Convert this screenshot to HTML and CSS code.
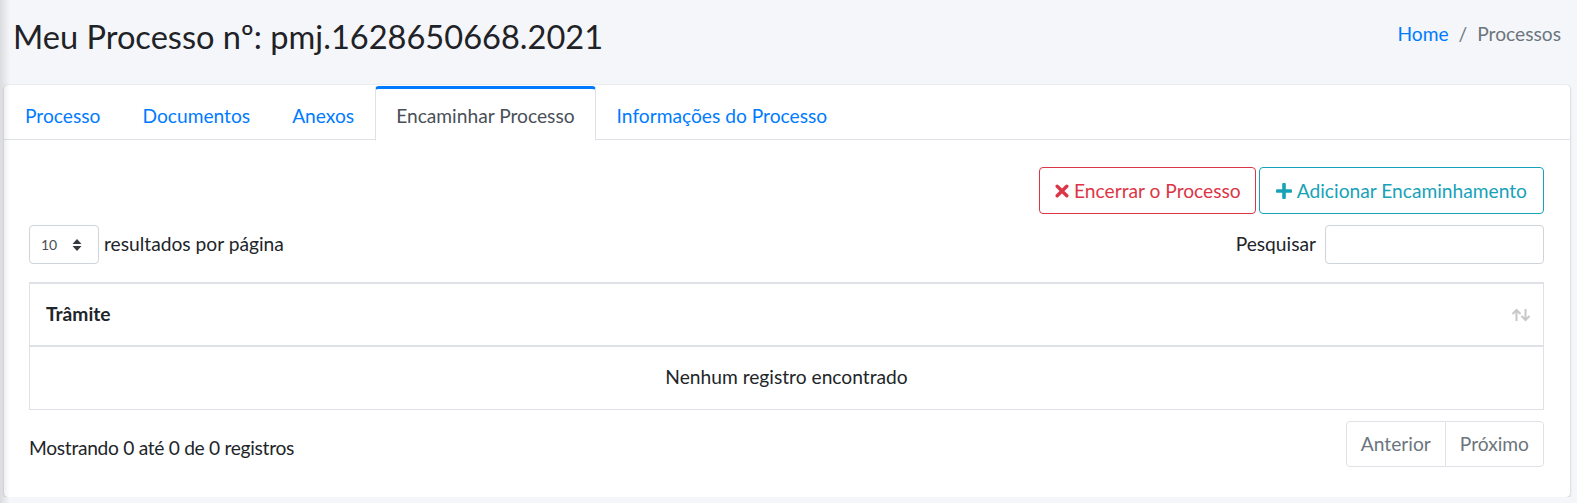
FILE: index.html
```html
<!DOCTYPE html>
<html lang="pt-BR">
<head>
<meta charset="utf-8">
<title>Meu Processo</title>
<link rel="stylesheet" href="styles.css">
</head>
<body>
<div class="shade"></div>
<main class="content">
  <header class="content-header">
    <h1 class="page-title">Meu Processo nº: pmj.1628650668.2021</h1>
    <nav class="breadcrumb">
      <a class="crumb-link" href="#">Home</a>
      <span class="crumb-sep">/</span>
      <span class="crumb-active">Processos</span>
    </nav>
  </header>

  <section class="card">
    <div class="card-header">
      <ul class="tabs">
        <li class="tab"><a class="tab-link" href="#">Processo</a></li>
        <li class="tab"><a class="tab-link" href="#">Documentos</a></li>
        <li class="tab"><a class="tab-link" href="#">Anexos</a></li>
        <li class="tab"><a class="tab-link active" href="#">Encaminhar Processo</a></li>
        <li class="tab"><a class="tab-link" href="#">Informações do Processo</a></li>
      </ul>
    </div>

    <div class="card-body">
      <div class="actions">
        <button class="btn btn-danger" type="button">
          <svg class="btn-icon" viewBox="0 0 14 14" width="14" height="14"><path d="M2.2 2.2 L11.8 11.8 M11.8 2.2 L2.2 11.8" stroke="currentColor" stroke-width="3.4" stroke-linecap="round"/></svg>
          Encerrar o Processo
        </button>
        <button class="btn btn-info" type="button">
          <svg class="btn-icon plus" viewBox="0 0 16 16" width="16" height="16"><path d="M8 1.5 V14.5 M1.5 8 H14.5" stroke="currentColor" stroke-width="3.6" stroke-linecap="round"/></svg>
          Adicionar Encaminhamento
        </button>
      </div>

      <div class="dt-top">
        <label class="dt-length">
          <span class="select-box">
            <span class="select-value">10</span>
            <svg class="select-arrows" viewBox="0 0 10 14" width="10" height="14"><path d="M5 1 L9.5 6 H0.5 Z M5 13 L9.5 8 H0.5 Z" fill="#343a40"/></svg>
          </span>
          <span class="dt-length-text">resultados por página</span>
        </label>
        <label class="dt-search">
          <span class="dt-search-text">Pesquisar</span>
          <span class="search-input"></span>
        </label>
      </div>

      <table class="dt-table">
        <thead>
          <tr>
            <th class="th-sort">
              <span>Trâmite</span>
              <svg class="sort-icon" viewBox="0 0 20 14" width="20" height="14"><path d="M5.5 13 V2 M1.5 6 L5.5 2 L9.5 6" stroke="#c8c8c8" stroke-width="2" fill="none"/><path d="M14.5 1 V12 M10.5 8 L14.5 12 L18.5 8" stroke="#c8c8c8" stroke-width="2" fill="none"/></svg>
            </th>
          </tr>
        </thead>
        <tbody>
          <tr><td class="td-empty">Nenhum registro encontrado</td></tr>
        </tbody>
      </table>

      <div class="dt-bottom">
        <div class="dt-info">Mostrando 0 até 0 de 0 registros</div>
        <ul class="pagination">
          <li class="page-item"><a class="page-link" href="#">Anterior</a></li>
          <li class="page-item"><a class="page-link" href="#">Próximo</a></li>
        </ul>
      </div>
    </div>
  </section>
</main>
</body>
</html>
```
FILE: styles.css
```css
* { box-sizing: border-box; }

html, body {
  margin: 0;
  padding: 0;
}

body {
  background: #f4f6f9;
  color: #212529;
  font-family: Lato, "Noto Sans", Arial, sans-serif;
  font-size: 19.2px;
  line-height: 1.5;
}

.shade {
  position: fixed;
  left: 0;
  top: 0;
  bottom: 0;
  width: 10px;
  background: linear-gradient(to right, rgba(0,0,0,0.10), rgba(0,0,0,0));
  pointer-events: none;
  z-index: 10;
}

.content {
  padding: 0 7px 0 4px;
}

.content-header {
  display: flex;
  justify-content: space-between;
  align-items: flex-start;
  height: 85px;
  padding: 17px 9px 0 9px;
}

.page-title {
  margin: 0;
  font-size: 32.6px;
  font-weight: 400;
  line-height: 1.2;
  color: #1f2226;
}

.breadcrumb {
  display: flex;
  align-items: center;
  gap: 10px;
  padding-top: 3px;
  font-size: 19.2px;
}

.crumb-link {
  color: #007bff;
  text-decoration: none;
}

.crumb-sep,
.crumb-active {
  color: #6c757d;
}

.card {
  background: #fff;
  border-radius: 4px;
  box-shadow: 0 0 1px rgba(0,0,0,0.125), 0 1px 3px rgba(0,0,0,0.2);
  overflow: hidden;
}

.card-header {
  border-bottom: 1px solid #dee2e6;
  padding-top: 1px;
  height: 55px;
}

.tabs {
  display: flex;
  list-style: none;
  margin: 0;
  padding: 0;
}

.tab {
  margin-bottom: -1px;
}

.tab-link {
  display: block;
  height: 55px;
  padding: 3px 20px 0;
  line-height: 48px;
  color: #007bff;
  text-decoration: none;
  border: 1px solid transparent;
  border-top: 3px solid transparent;
  border-radius: 4px 4px 0 0;
}

.tab-link.active {
  color: #495057;
  background: #fff;
  border-color: #dee2e6 #dee2e6 #fff;
  border-top-color: #007bff;
}

.card-body {
  padding: 27px 26px 30px 25px;
}

.actions {
  display: flex;
  justify-content: flex-end;
  gap: 3px;
}

.btn {
  display: inline-flex;
  align-items: center;
  gap: 5px;
  height: 47px;
  padding: 0 15px;
  font-family: inherit;
  font-size: 19.2px;
  background: #fff;
  border: 1px solid;
  border-radius: 4px;
  cursor: pointer;
}

.btn-icon {
  flex: none;
}

.btn-danger {
  color: #dc3545;
  border-color: #dc3545;
  padding-right: 14px;
}

.btn-info {
  color: #17a2b8;
  border-color: #17a2b8;
  padding-right: 16px;
  padding-left: 16px;
}

.dt-top {
  display: flex;
  justify-content: space-between;
  align-items: center;
  margin-top: 11px;
}

.dt-length,
.dt-search {
  display: flex;
  align-items: center;
}

.select-box {
  display: flex;
  align-items: center;
  justify-content: space-between;
  width: 70px;
  height: 39px;
  padding: 0 16px 0 11px;
  border: 1px solid #ced4da;
  border-radius: 4px;
  font-size: 14px;
  color: #495057;
}

.dt-length-text {
  margin-left: 5px;
}

.dt-search-text {
  margin-right: 9px;
}

.search-input {
  display: block;
  width: 219px;
  height: 39px;
  border: 1px solid #ced4da;
  border-radius: 4px;
}

.dt-table {
  width: 100%;
  margin-top: 18px;
  border-collapse: collapse;
  border: 1px solid #dee2e6;
}

.th-sort {
  position: relative;
  height: 63px;
  padding: 0 14px 0 16px;
  text-align: left;
  font-weight: 700;
  border-top: 2px solid #dee2e6;
  border-bottom: 2px solid #dee2e6;
}

.sort-icon {
  position: absolute;
  right: 12px;
  top: 24px;
}

.td-empty {
  height: 63px;
  text-align: center;
  vertical-align: middle;
}

.dt-bottom {
  display: flex;
  justify-content: space-between;
  align-items: flex-start;
  margin-top: 11px;
}

.dt-info {
  padding-top: 13px;
  letter-spacing: -0.3px;
}

.pagination {
  display: flex;
  list-style: none;
  margin: 0;
  padding: 0;
}

.page-link {
  display: block;
  height: 46px;
  line-height: 44px;
  padding: 0 14px;
  color: #6c757d;
  text-decoration: none;
  border: 1px solid #dee2e6;
  background: #fff;
}

.page-item:first-child .page-link {
  border-radius: 4px 0 0 4px;
}

.page-item:last-child .page-link {
  border-radius: 0 4px 4px 0;
  margin-left: -1px;
}
```
